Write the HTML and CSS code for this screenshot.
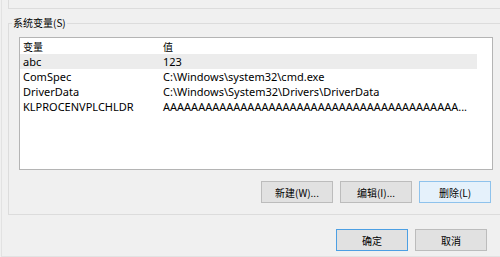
FILE: index.html
```html
<!DOCTYPE html>
<html lang="zh-CN">
<head>
    <meta charset="UTF-8">
    <meta name="viewport" content="width=device-width, initial-scale=1.0">
    <title>环境变量</title>
    <link rel="stylesheet" href="styles.css">
</head>
<body>
    <div class="dialog">
        <div class="user-group"></div>

        <div class="group">
            <span class="group-title">系统变量(S)</span>
            <div class="list">
                <table class="vars">
                    <colgroup>
                        <col class="col-name">
                        <col>
                    </colgroup>
                    <thead>
                        <tr><th>变量</th><th>值</th></tr>
                    </thead>
                    <tbody>
                        <tr class="selected"><td>abc</td><td>123</td></tr>
                        <tr><td>ComSpec</td><td>C:\Windows\system32\cmd.exe</td></tr>
                        <tr><td>DriverData</td><td>C:\Windows\System32\Drivers\DriverData</td></tr>
                        <tr><td>KLPROCENVPLCHLDR</td><td>AAAAAAAAAAAAAAAAAAAAAAAAAAAAAAAAAAAAAAAAAA...</td></tr>
                    </tbody>
                </table>
            </div>
            <div class="list-actions">
                <button type="button">新建(W)...</button>
                <button type="button">编辑(I)...</button>
                <button type="button" class="hover">删除(L)</button>
            </div>
        </div>

        <div class="dialog-actions">
            <button type="button" class="default">确定</button>
            <button type="button">取消</button>
        </div>
    </div>
</body>
</html>
```

FILE: styles.css
```css
:root {
    --bg-color: #f0f0f0;
    --group-line: #dcdcdc;
    --list-border: #b4b4b4;
    --btn-bg: #e1e1e1;
    --btn-border: #bcbcbc;
    --accent: #4c9fe3;
    --text-color: #000;
}

* {
    margin: 0;
    padding: 0;
    box-sizing: border-box;
}

body {
    background-color: var(--bg-color);
    font-family: "Noto Sans", "Noto Sans CJK SC", sans-serif;
    font-size: 11px;
    color: var(--text-color);
    overflow: hidden;
}

.dialog {
    margin-left: 1px;
    height: 257px;
    padding-left: 6px;
    border-left: 1px solid #e2e2e2;
    border-bottom: 1px solid #e2e2e2;
}

/* bottom edge of the user variables box above */
.user-group {
    height: 9px;
    border-left: 1px solid var(--group-line);
    border-bottom: 1px solid var(--group-line);
}

.group {
    position: relative;
    margin-top: 14px;
    height: 192px;
    padding: 13px 0 0 10px;
    border: 1px solid var(--group-line);
    border-right: none;
}

.group-title {
    position: absolute;
    top: -9px;
    left: 3px;
    padding: 0 1px;
    background-color: var(--bg-color);
    font-family: "Noto Sans CJK SC", sans-serif;
    font-size: 10px;
    line-height: 16px;
}

.list {
    width: 474px;
    height: 133px;
    background-color: white;
    border: 1px solid var(--list-border);
}

.vars {
    width: 457px;
    border-collapse: collapse;
    table-layout: fixed;
}

.col-name {
    width: 140px;
}

.vars th {
    height: 16px;
    padding: 0 3px;
    text-align: left;
    font-weight: normal;
    font-family: "Noto Sans CJK SC", sans-serif;
    font-size: 10px;
}

.vars td {
    height: 15px;
    padding: 0 3px;
    line-height: 15px;
    white-space: nowrap;
    overflow: hidden;
}

.vars tr.selected td {
    background-color: #ececec;
}

.list-actions,
.dialog-actions {
    display: flex;
    justify-content: flex-end;
    gap: 7px;
}

.list-actions {
    margin-top: 11px;
    padding-right: 9px;
}

.dialog-actions {
    margin-top: 14px;
    padding-right: 13px;
}

button {
    width: 72px;
    height: 22px;
    background-color: var(--btn-bg);
    border: 1px solid var(--btn-border);
    font-family: "Noto Sans CJK SC", sans-serif;
    font-size: 10px;
    color: var(--text-color);
}

button.hover {
    background-color: #e5f1fb;
    border-color: #8ec2ec;
}

button.default {
    border-color: var(--accent);
}
```
